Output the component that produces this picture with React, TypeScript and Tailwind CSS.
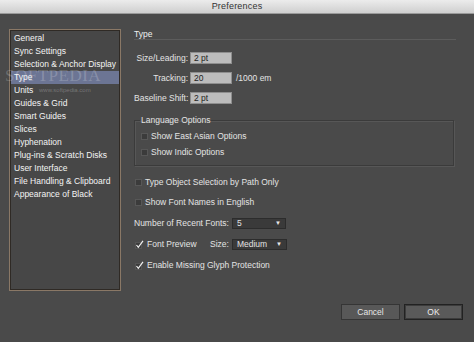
const sections = [
  "General",
  "Sync Settings",
  "Selection & Anchor Display",
  "Type",
  "Units",
  "Guides & Grid",
  "Smart Guides",
  "Slices",
  "Hyphenation",
  "Plug-ins & Scratch Disks",
  "User Interface",
  "File Handling & Clipboard",
  "Appearance of Black",
];

function Check({ checked = false }: { checked?: boolean }) {
  if (checked) {
    return (
      <svg width="9" height="9" viewBox="0 0 9 9" className="shrink-0">
        <rect x="0.5" y="2.5" width="6" height="6" fill="#3c3c3c" stroke="#555" />
        <path d="M1.5 5 L3.3 7.3 L8 0.8" fill="none" stroke="#f2f2f2" strokeWidth="1.2" />
      </svg>
    );
  }
  return <span className="w-[7px] h-[7px] shrink-0 bg-[#3b3b3b] border border-[#575757]" />;
}

function Field({ value }: { value: string }) {
  return (
    <div className="w-[42px] h-[12px] bg-[#bcbcbc] border border-[#8e8e8e] text-[#1e1e1e] pl-[3px] leading-[10px]">
      {value}
    </div>
  );
}

function Select({ value, width }: { value: string; width: string }) {
  return (
    <div
      className={`${width} h-[11px] bg-[#3a3a3a] border border-[#2c2c2c] flex items-center justify-between pl-[4px] pr-[4px] text-[#e2e2e2]`}
    >
      <span className="leading-[9px]">{value}</span>
      <span className="text-[6px] leading-[6px] text-[#e8e8e8]">▼</span>
    </div>
  );
}

function Option({ label, checked, className = "" }: { label: string; checked?: boolean; className?: string }) {
  return (
    <div className={`flex items-center gap-[2px] h-[12px] whitespace-nowrap ${className}`}>
      <Check checked={checked} />
      <span className="ml-[1px]">{label}</span>
    </div>
  );
}

export default function App() {
  return (
    <div
      className="w-[474px] h-[342px] bg-[#4a4a4a] flex flex-col overflow-hidden text-[8.5px] text-[#e4e4e4]"
      style={{ fontFamily: '"Liberation Sans", Arial, sans-serif' }}
    >
      <div className="h-[14px] shrink-0 bg-gradient-to-b from-[#ececec] to-[#cfcfcf] border-b border-[#9a9a9a] flex items-center justify-center">
        <span className="text-[9px] text-[#333333] tracking-[0.2px]">Preferences</span>
      </div>

      <div className="flex pl-[9px] pt-[15px]">
        {/* sidebar */}
        <div className="relative w-[112px] h-[262px] border border-[#8a7866]">
          <div className="h-full border border-[#2f2a25] bg-[#474747] pt-[1px]">
            {sections.map((s) => (
              <div
                key={s}
                className={`h-[13px] leading-[13px] pl-[3px] whitespace-nowrap text-[#f4f4f4] ${
                  s === "Type" ? "bg-[#6c7594]" : ""
                }`}
              >
                {s}
              </div>
            ))}
          </div>
          <div
            className="absolute left-[-5px] top-[37px] text-[17px] leading-[17px] text-white/20 tracking-[0.5px] pointer-events-none"
            style={{ fontFamily: '"Liberation Serif", serif' }}
          >
            SOFTPEDIA
          </div>
          <div className="absolute left-[29px] top-[56px] text-[6px] text-white/25 pointer-events-none">
            www.softpedia.com
          </div>
        </div>

        {/* panel */}
        <div className="ml-[13px] w-[322px] flex flex-col">
          <div className="h-[11px] leading-[11px] border-b border-[#5c5c5c] text-[#f0f0f0]">Type</div>

          <div className="flex flex-col gap-[8px] mt-[12px] whitespace-nowrap">
            <div className="flex items-center h-[12px]">
              <span className="w-[56px] text-right pr-[2px]">Size/Leading:</span>
              <Field value="2 pt" />
            </div>
            <div className="flex items-center h-[12px]">
              <span className="w-[56px] text-right pr-[2px]">Tracking:</span>
              <Field value="20" />
              <span className="ml-[4px]">/1000 em</span>
            </div>
            <div className="flex items-center h-[12px]">
              <span className="w-[56px] text-right pr-[2px]">Baseline Shift:</span>
              <Field value="2 pt" />
            </div>
          </div>

          <fieldset className="mt-[11px] w-[320px] h-[51px] border border-[#3b3b3b] shadow-[inset_1px_1px_0_#575757,1px_1px_0_#575757] px-[6px]">
            <legend className="px-[1px] ml-[-1px] leading-[10px]">Language Options</legend>
            <Option label="Show East Asian Options" className="mt-[5px]" />
            <Option label="Show Indic Options" className="mt-[4px]" />
          </fieldset>

          <Option label="Type Object Selection by Path Only" className="mt-[10px] pl-[1px]" />
          <Option label="Show Font Names in English" className="mt-[8px] pl-[1px]" />

          <div className="flex items-center h-[12px] mt-[9px] whitespace-nowrap">
            <span>Number of Recent Fonts:</span>
            <div className="ml-[3px]">
              <Select value="5" width="w-[54px]" />
            </div>
          </div>

          <div className="flex items-center h-[12px] mt-[9px] whitespace-nowrap">
            <Option label="Font Preview" checked className="pl-[1px] w-[76px]" />
            <span>Size:</span>
            <div className="ml-[3px]">
              <Select value="Medium" width="w-[55px]" />
            </div>
          </div>

          <Option label="Enable Missing Glyph Protection" checked className="mt-[9px] pl-[1px]" />
        </div>
      </div>

      <div className="flex justify-end gap-[4px] pr-[11px] mt-[13px]">
        <button className="w-[59px] h-[16px] bg-[#585858] border border-[#353535] text-[#e6e6e6] text-[8.5px]">
          Cancel
        </button>
        <button className="w-[59px] h-[16px] bg-[#5a5a5a] border border-[#222222] shadow-[inset_0_0_0_1px_#3c3c3c] text-[#eeeeee] text-[8.5px]">
          OK
        </button>
      </div>
    </div>
  );
}
